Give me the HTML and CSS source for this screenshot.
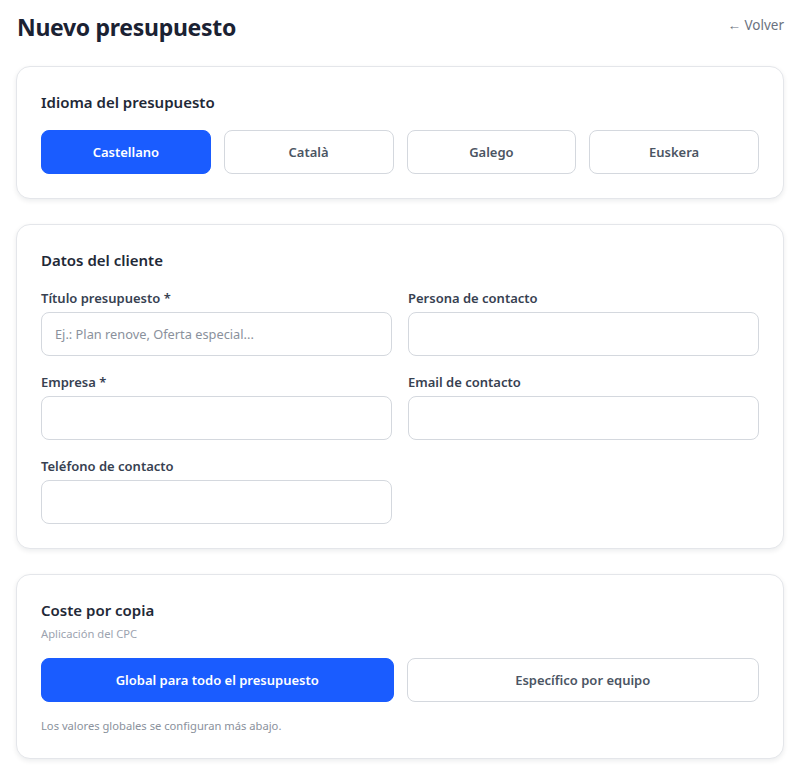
FILE: index.html
```html
<!DOCTYPE html>
<html lang="es">
<head>
<meta charset="utf-8">
<title>Nuevo presupuesto</title>
<link rel="stylesheet" href="styles.css">
</head>
<body>
<main class="page">
  <header class="page-header">
    <h1 class="page-title">Nuevo presupuesto</h1>
    <a class="back-link" href="#">← Volver</a>
  </header>

  <section class="card">
    <h2 class="card-title">Idioma del presupuesto</h2>
    <div class="options options-4">
      <button class="opt opt-active">Castellano</button>
      <button class="opt">Català</button>
      <button class="opt">Galego</button>
      <button class="opt">Euskera</button>
    </div>
  </section>

  <section class="card">
    <h2 class="card-title">Datos del cliente</h2>
    <div class="form-grid">
      <label class="field">
        <span class="field-label">Título presupuesto *</span>
        <input class="input" type="text" placeholder="Ej.: Plan renove, Oferta especial...">
      </label>
      <label class="field">
        <span class="field-label">Persona de contacto</span>
        <input class="input" type="text">
      </label>
      <label class="field">
        <span class="field-label">Empresa *</span>
        <input class="input" type="text">
      </label>
      <label class="field">
        <span class="field-label">Email de contacto</span>
        <input class="input" type="text">
      </label>
      <label class="field">
        <span class="field-label">Teléfono de contacto</span>
        <input class="input" type="text">
      </label>
    </div>
  </section>

  <section class="card">
    <h2 class="card-title">Coste por copia</h2>
    <p class="card-sub">Aplicación del CPC</p>
    <div class="options options-2">
      <button class="opt opt-active">Global para todo el presupuesto</button>
      <button class="opt">Específico por equipo</button>
    </div>
    <p class="note">Los valores globales se configuran más abajo.</p>
  </section>
</main>
</body>
</html>
```

FILE: styles.css
```css
* { box-sizing: border-box; }
html, body { margin: 0; padding: 0; background: #ffffff; }
body {
  font-family: "Noto Sans", "Open Sans", "Liberation Sans", sans-serif;
  color: #1f2937;
}
.page {
  padding: 10px 24px 20px 16px;
  display: flex;
  flex-direction: column;
  gap: 25px;
}
.page-header {
  display: flex;
  justify-content: space-between;
  align-items: center;
  height: 34px;
  margin-bottom: -3px;
}
.page-title {
  margin: 0 0 0 1px;
  font-size: 23px;
  font-weight: 700;
  color: #1b2233;
  letter-spacing: -0.3px;
  line-height: 34px;
}
.back-link {
  font-size: 13.5px;
  color: #6b7280;
  text-decoration: none;
  margin-top: -4px;
}
.card {
  border: 1px solid #e4e6ea;
  border-radius: 14px;
  background: #fff;
  box-shadow: 0 2px 5px rgba(17, 24, 39, 0.08);
  padding: 23px 24px 24px 24px;
}
.card-title {
  margin: 0;
  font-size: 15px;
  font-weight: 600;
  line-height: 24px;
  color: #1f2937;
}
.card-sub {
  margin: 4px 0 0;
  font-size: 11.2px;
  line-height: 16px;
  color: #9ca3af;
}
.options {
  display: grid;
  gap: 13px;
  margin-top: 16px;
}
.options-4 { grid-template-columns: repeat(4, 1fr); }
.options-2 { grid-template-columns: repeat(2, 1fr); margin-top: 16px; }
.opt {
  height: 44px;
  border: 1px solid #d4d8de;
  border-radius: 8px;
  background: #fff;
  font-family: inherit;
  font-size: 13px;
  font-weight: 600;
  color: #4b5563;
  cursor: pointer;
}
.opt-active {
  background: #1a5cff;
  border-color: #1a5cff;
  color: #fff;
}
.form-grid {
  margin-top: 16px;
  display: grid;
  grid-template-columns: 1fr 1fr;
  column-gap: 16px;
  row-gap: 16px;
}
.field {
  display: flex;
  flex-direction: column;
  gap: 4px;
}
.field-label {
  font-size: 13px;
  font-weight: 600;
  line-height: 20px;
  color: #374151;
}
.input {
  height: 44px;
  border: 1px solid #d4d8de;
  border-radius: 8px;
  padding: 0 13px;
  font-family: inherit;
  font-size: 12.8px;
  color: #1f2937;
  background: #fff;
}
.input::placeholder { color: #8a919c; }
.note {
  margin: 16px 0 0;
  font-size: 11.2px;
  line-height: 16px;
  color: #8a919c;
}
```
